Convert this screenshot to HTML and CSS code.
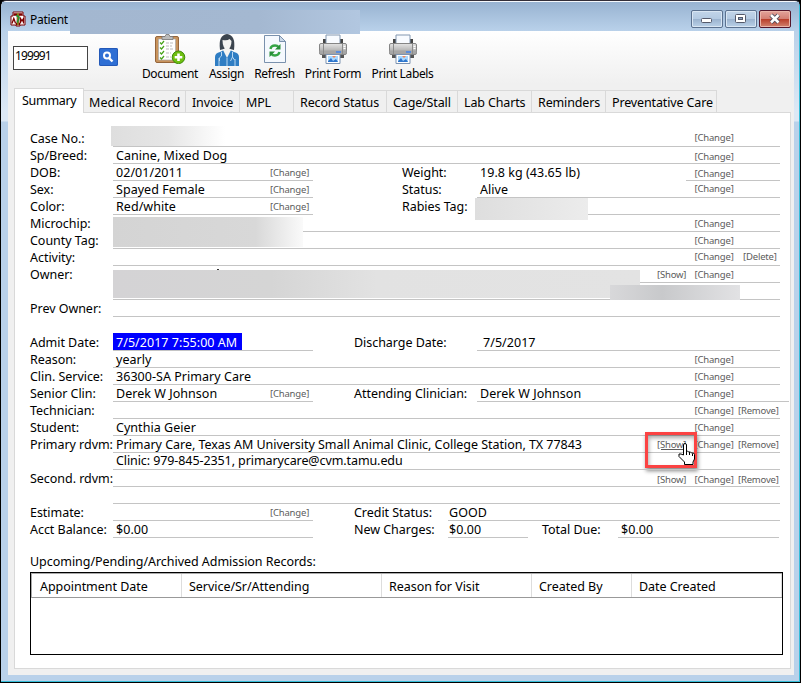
FILE: index.html
```html
<!DOCTYPE html>
<html lang="en">
<head>
<meta charset="utf-8">
<title>Patient</title>
<link rel="stylesheet" href="styles.css">
</head>
<body>
<svg class="defs" width="0" height="0" aria-hidden="true">
  <defs>
    <linearGradient id="metal" x1="0" y1="0" x2="0" y2="1"><stop offset="0" stop-color="#e4e4e4"/><stop offset="1" stop-color="#9b9b9b"/></linearGradient>
    <symbol id="printer" viewBox="0 0 30 30">
      <path d="M5 5h20v6H5z" fill="#444"/>
      <path d="M8 1h14v10H8z" fill="#f8fbff" stroke="#8297b0"/>
      <rect x="1.500" y="9.500" width="27" height="11" rx="1.500" fill="url(#metal)" stroke="#858585"/>
      <path d="M1.500 16.500h27v3h-27z" fill="#a6a6a6"/>
      <path d="M24.500 10v10M5.500 10v10" stroke="#8b8b8b"/>
      <path d="M25.500 12.500h2M25.500 14.500h2" stroke="#fff"/>
      <path d="M4 21h22v3H4z" fill="#555"/>
      <path d="M18 18h5" stroke="#3f83ee" stroke-width="1.500"/>
      <path d="M8 20.500h14v9H8z" fill="#fff" stroke="#7c93b1"/>
      <path d="M10 22h10v6H10z" fill="#a9d8ff"/>
      <path d="M10 27l3-3 2 3 3-2 2 3H10z" fill="#2f76cc"/><path d="M14 22l2 2 2-2z" fill="#f08858"/>
    </symbol>
  </defs>
</svg>
<div class="window">
  <header class="titlebar">
    <svg class="logo" viewBox="0 0 16 16"><path d="M3 1h10v4h2v9h-5v1H6v-1H1V5h2z" fill="#fff" stroke="#7d0000"/><path d="M3.500 3.500h9M8 3v10M6 13h4" stroke="#7d0000" stroke-width="2.500" fill="none"/><path d="M2 12.500l1.800-5 1.800 5M10.500 12.500v-5l1.500 2.500 1.500-2.500v5" stroke="#7d0000" fill="none" stroke-width="1.300"/><path d="M8 2v12" stroke="#8fa42a" stroke-width="1.400"/><path d="M6 4.500q4 1 3 3t-2 4" stroke="#159a35" fill="none" stroke-width="1.300"/></svg>
    <span class="title">Patient</span>
    <i class="mask mask-title"></i>
    <div class="winbtns">
      <b class="wb"><svg viewBox="0 0 32 18"><rect x="10.500" y="8.500" width="10" height="4" rx="1" fill="#fff" stroke="#54596a"/></svg></b>
      <b class="wb"><svg viewBox="0 0 32 18"><rect x="10.500" y="4.500" width="10" height="8" rx="1" fill="#fff" stroke="#54596a"/><rect x="13.500" y="7.500" width="4" height="2" fill="#8ca5c4" stroke="#54596a"/></svg></b>
      <b class="wb close"><svg viewBox="0 0 32 18"><path d="M12 5l7.500 7.500M19.500 5L12 12.500" stroke="#4c4c5c" stroke-width="4.400"/><path d="M12 5l7.500 7.500M19.500 5L12 12.500" stroke="#fff" stroke-width="2.500"/></svg></b>
    </div>
  </header>
  <main class="client">
    <div class="toolbar">
      <div class="search">199991</div>
      <div class="find"><svg viewBox="0 0 19 18"><circle cx="8" cy="7.500" r="3" fill="none" stroke="#fff" stroke-width="2"/><path d="M10 10l3.500 3.500" stroke="#fff" stroke-width="2.400"/></svg></div>
      <div class="tool document"><svg viewBox="0 0 32 30">
        <rect x="1.500" y="2.500" width="23" height="26" rx="1.500" fill="#c8935c" stroke="#95653b"/><path d="M4.500 5h17v21h-17z" fill="#fff" stroke="#aaa" stroke-width=".7"/>
        <path d="M8 2.500h3l1-2h3l1 2h3v3H8z" fill="#bbb" stroke="#777" stroke-width=".8"/>
        <path d="M6 8.500l1.500 1.500L10 7M6 13.500L7.500 15l2.500-3M6 18.500L7.500 20l2.500-3M6 23.500L7.500 25l2.500-3" stroke="#48a41b" fill="none" stroke-width="1.200"/>
        <path d="M12 9h7M12 12h6M12 15h7M12 19h5M12 23h5" stroke="#bbb" stroke-dasharray="3 1"/>
        <circle cx="24.500" cy="23.300" r="6.300" fill="#6fbf10" stroke="#3d8a0a"/><path d="M24.500 19.500v7.600M20.700 23.300h7.600" stroke="#fff" stroke-width="2.600"/></svg><span>Document</span></div>
      <div class="tool assign"><svg viewBox="0 0 24 32">
        <path d="M5 16Q3 1 12 0q9 1 7 16l-4-1H9z" fill="#3c454f"/><path d="M7.500 6q5 1 7-1l2 2q0 7-4.500 9Q7.500 14 7.500 6z" fill="#f5f4f1"/>
        <path d="M0 32V23q0-4 5-5l4-2 3 5 3-5 4 2q5 1 5 5v9z" fill="#2f7dc3"/><path d="M8 16l4 8 4-8-2-2h-4z" fill="#f5f4f1"/>
        <path d="M6.500 18v4q-3 1-2 5M17.500 18v5l-2 4M17.500 23l2 3M12 24v8M4 24v8M20 25v7" stroke="#b9d8f1" fill="none"/></svg><span>Assign</span></div>
      <div class="tool refresh"><svg viewBox="0 0 22 30"><path d="M.500 1.500h15l6 6v21H.500z" fill="#f5f9fe" stroke="#7a91ad"/><path d="M15.500 1.500v6h6z" fill="#cbd9e8" stroke="#7a91ad"/>
        <path d="M6.500 15q.500-3.500 4.500-3.500 2.500 0 3.500 1.500M15.500 18q-1 3.500-4.500 3.500-2.500 0-3.500-1.500" fill="none" stroke="#35a445" stroke-width="2.400"/><path d="M16.500 10v5.500H11zM5.500 23v-5.500H11z" fill="#288e39"/></svg><span>Refresh</span></div>
      <div class="tool form"><svg viewBox="0 0 30 30"><use href="#printer"/></svg><span>Print Form</span></div>
      <div class="tool labels"><svg viewBox="0 0 30 30"><use href="#printer"/></svg><span>Print Labels</span></div>
    </div>
    <nav class="tabs">
      <div class="tab active">Summary</div><div class="tab t2">Medical Record</div><div class="tab t3">Invoice</div><div class="tab t4">MPL</div><div class="tab t5">Record Status</div><div class="tab t6">Cage/Stall</div><div class="tab t7">Lab Charts</div><div class="tab t8">Reminders</div><div class="tab t9">Preventative Care</div>
    </nav>
    <section class="page">
      <div class="row"><label>Case No.:</label><div class="field"><i class="mask mask-case"></i><div class="acts up"><a class="c2">[Change]</a></div></div></div>
      <div class="row"><label>Sp/Breed:</label><div class="field"><span>Canine, Mixed Dog</span><div class="acts down"><a class="c2">[Change]</a></div></div></div>
      <div class="row"><label>DOB:</label><div class="field half"><span>02/01/2011</span><a class="own">[Change]</a></div><label class="mid">Weight:</label><div class="plain">19.8 kg (43.65 lb)</div><div class="field short"><div class="acts down"><a class="c2">[Change]</a></div></div></div>
      <div class="row"><label>Sex:</label><div class="field half"><span>Spayed Female</span><a class="own">[Change]</a></div><label class="mid">Status:</label><div class="field"><span>Alive</span><div class="acts up"><a class="c2">[Change]</a></div></div></div>
      <div class="row"><label>Color:</label><div class="field half"><span>Red/white</span><a class="own">[Change]</a></div><label class="mid">Rabies Tag:</label><div class="field"><i class="mask mask-rabies"></i></div></div>
      <div class="row"><label>Microchip:</label><div class="field"><i class="mask mask-chip"></i><div class="acts"><a class="c2">[Change]</a></div></div></div>
      <div class="row"><label>County Tag:</label><div class="field"><div class="acts"><a class="c2">[Change]</a></div></div></div>
      <div class="row"><label>Activity:</label><div class="field"><div class="acts up"><a class="c2">[Change]</a><a class="c3 del">[Delete]</a></div></div></div>
      <div class="row"><label>Owner:</label><div class="field"><i class="speck"></i><i class="mask mask-owner"></i><div class="acts"><a class="c1">[Show]</a><a class="c2">[Change]</a></div></div></div>
      <div class="row"><label></label><div class="field"><i class="mask mask-owner2"></i></div></div>
      <div class="row"><label>Prev Owner:</label><div class="field"></div></div>
      <div class="row"></div>
      <div class="row"><label>Admit Date:</label><div class="field half"><span class="selected">7/5/2017 7:55:00 AM</span></div><label class="mid2">Discharge Date:</label><div class="field discharge"><span>7/5/2017</span></div></div>
      <div class="row"><label>Reason:</label><div class="field"><span>yearly</span><div class="acts"><a class="c2">[Change]</a></div></div></div>
      <div class="row"><label>Clin. Service:</label><div class="field"><span>36300-SA Primary Care</span><div class="acts"><a class="c2">[Change]</a></div></div></div>
      <div class="row long"><label>Senior Clin:</label><div class="field half"><span>Derek W Johnson</span><a class="own">[Change]</a></div><label class="mid2">Attending Clinician:</label><div class="field"><span>Derek W Johnson</span><div class="acts"><a class="c2">[Change]</a></div></div></div>
      <div class="row"><label>Technician:</label><div class="field"><div class="acts"><a class="c2">[Change]</a><a class="c3">[Remove]</a></div></div></div>
      <div class="row"><label>Student:</label><div class="field"><span>Cynthia Geier</span><div class="acts"><a class="c2">[Change]</a></div></div></div>
      <div class="row"><label>Primary rdvm:</label><div class="field"><span class="address">Primary Care, Texas AM University Small Animal Clinic, College Station, TX 77843</span><div class="acts"><a class="c1 hover">[Show]</a><a class="c2">[Change]</a><a class="c3">[Remove]</a></div>
        <div class="callout"><svg viewBox="0 0 18 23"><path d="M5.500 12V2q0-1.500 1.500-1.500T8.500 2v6h1l1 1h2l1 1h2l1 1.500V16l-1.500 3v2.500H6.500V19L1 13.500V11h2z" fill="#fff" stroke="#000"/><path d="M8.500 8v4M11.500 9v3M14.500 10.500V13" stroke="#000" fill="none"/></svg></div></div></div>
      <div class="row"><label></label><div class="field"><span class="raised">Clinic: 979-845-2351, primarycare@cvm.tamu.edu</span></div></div>
      <div class="row"><label>Second. rdvm:</label><div class="field"><div class="acts down"><a class="c1">[Show]</a><a class="c2">[Change]</a><a class="c3">[Remove]</a></div></div></div>
      <div class="row"><label></label><div class="field"></div></div>
      <div class="row"><label>Estimate:</label><div class="field half"><span></span><a class="own">[Change]</a></div><label class="mid3">Credit Status:</label><div class="field flush"><span>GOOD</span></div></div>
      <div class="row"><label>Acct Balance:</label><div class="field half"><span>$0.00</span></div><label class="mid3">New Charges:</label><div class="field flush charges"><span>$0.00</span></div><label class="total">Total Due:</label><div class="field due"><span>$0.00</span></div></div>
      <h2>Upcoming/Pending/Archived Admission Records:</h2>
      <div class="records">
        <div class="head"><div>Appointment Date</div><div>Service/Sr/Attending</div><div>Reason for Visit</div><div>Created By</div><div>Date Created</div></div>
      </div>
    </section>
  </main>
</div>
</body>
</html>
```
FILE: styles.css
```css
* { box-sizing: border-box; }
body {
  margin: 0;
  width: 801px;
  height: 683px;
  overflow: hidden;
  background: #000;
  color: #000;
  font: 12.5px/17px "Noto Sans", "Open Sans", sans-serif;
  letter-spacing: -0.04px;
}
.defs { position: absolute; }
svg { display: block; }
.window {
  width: 801px;
  height: 683px;
  border: 1px solid #000;
  border-top-color: #332e38;
  border-radius: 6px 6px 0 0;
  padding: 0 7px 7px;
  background: linear-gradient(#99b4d1 0, #bad1e9 30px, #dce8f5 110px, #dce8f5 120px, #b9d1ea 121px);
  box-shadow: inset -1px -1px #35bdd8, inset 0 1px #f5f8fc;
}
.titlebar {
  position: relative;
  display: flex;
  height: 30px;
  margin: 0 -6px;
  padding: 0 8px 0 8px;
  background: linear-gradient(transparent 1px, #98b3d1 1px, #b9d1ea 30px);
}
.logo { width: 16px; height: 16px; margin-top: 10px; }
.title { margin: 10px 0 0 4px; font-size: 12px; letter-spacing: -0.3px; }
.winbtns { display: flex; gap: 2px; margin: 9px 0 0 auto; }
.wb { width: 32px; height: 18px; border: 1px solid #5b718f; border-radius: 2px; background: linear-gradient(#c2d5e9, #b4cae2 48%, #9ab2ce 50%, #bad1e8); box-shadow: inset 0 0 0 1px #d9e6f3; }
.wb svg { width: 32px; height: 18px; margin: -1px; }
.wb.close { border-color: #54152a; background: linear-gradient(#e3a49b, #d48074 48%, #b83c28 50%, #d1836f); box-shadow: inset 0 0 0 1px #eab5a9; }
.client { height: 644px; margin-right: -1px; background: #f0f0f0; }
.toolbar { display: flex; height: 53px; padding-left: 5px; background: linear-gradient(#fff, #f0f0f0); }
.search { width: 75px; height: 24px; margin-top: 15px; padding: 0 1px; border: 1px solid #444; background: #fff; font-size: 12px; letter-spacing: -0.9px; }
.find { width: 19px; height: 18px; margin: 17px 24px 0 11px; border-radius: 2px; background: #2f6fd4; box-shadow: inset 0 0 0 1px #2459b8; }
.tool { display: flex; flex-direction: column; align-items: center; height: 53px; margin-right: 11px; white-space: nowrap; font-size: 12px; letter-spacing: -0.35px; }
.tool svg { height: 30px; margin-top: 3px; flex: none; }
.tool span { margin-top: 1px; }
.document { width: 56px; }
.document svg { width: 32px; }
.assign { width: 35px; }
.assign svg { width: 24px; height: 32px; }
.assign span { margin-top: -1px; }
.refresh { width: 39px; }
.refresh svg { width: 22px; }
.form { width: 56px; }
.labels { width: 61px; }
.form svg, .labels svg { width: 30px; }
.tabs { display: flex; align-items: flex-end; height: 28px; padding-left: 6px; }
.tab { height: 22px; padding: 3px 0 0 4px; border: 1px solid #d9d9d9; border-left: 0; border-bottom: 0; white-space: nowrap; font-size: 12.5px; letter-spacing: -0.14px; }
.tab.active { position: relative; width: 70px; height: 25px; margin-bottom: -1px; padding: 3px 0 0 7px; border-left: 1px solid #d9d9d9; background: #fff; letter-spacing: -0.3px; }
.tab.t2 { width: 102px; padding-left: 5px; letter-spacing: 0.1px; }
.t3 { width: 54px; padding-left: 6px; }
.t4 { width: 54px; padding-left: 6px; }
.t5 { width: 93px; padding-left: 6px; }
.t6 { width: 71px; padding-left: 6px; }
.t7 { width: 74px; padding-left: 6px; }
.t8 { width: 74px; padding-left: 6px; }
.t9 { width: 111px; padding-left: 6px; }
.page { width: 777px; height: 557px; margin-left: 6px; padding: 17px 7px 0 15px; border: 1px solid #d9d9d9; background: #fff; }
.row { display: flex; width: 750px; height: 17px; white-space: nowrap; }
.row.long { width: 759px; }
.row.long .acts { margin-right: 9px; }
label { flex: none; width: 83px; }
.mid { width: 75px; margin-left: 89px; }
.mid2 { width: 123px; margin-left: 41px; }
.mid3 { width: 94px; margin-left: 41px; }
.total { width: 76px; margin-left: 14px; }
.field { position: relative; display: flex; flex: 1; justify-content: space-between; min-width: 0; padding-left: 3px; border-bottom: 1px solid #c4c4c4; letter-spacing: 0.04px; }
.half { flex: none; width: 200px; }
.plain { width: 209px; padding-left: 3px; letter-spacing: 0.04px; }
.address { letter-spacing: -0.035px; }
.short { justify-content: flex-end; padding-left: 0; }
.short .acts { flex: none; margin-left: -40px; }
.discharge { padding-left: 6px; }
.flush { padding-left: 1px; }
.charges { flex: none; width: 80px; }
.due { margin-right: 1px; }
.acts { display: grid; grid-template-columns: 37.5px 43.5px 42px; margin-left: auto; }
.acts, .own { color: #5c5c5c; font-size: 9.5px; letter-spacing: -0.18px; line-height: 17px; }
.own { width: 43px; }
.acts.up { line-height: 15px; }
.acts.down { line-height: 19px; }
.c1 { grid-column: 1; }
.c2 { grid-column: 2; }
.c3 { grid-column: 3; }
.del { padding-left: 5px; }
.hover { text-decoration: underline; }
.raised { line-height: 15px; letter-spacing: -0.09px; }
.selected { height: 17px; margin: -1px 0 0 -3px; padding: 1px 0 0 3px; background: #00f; color: #fff; width: 129px; }
.mask { position: absolute; }
.mask-title { left: 68px; top: 9px; z-index: 1; width: 290px; height: 24px; background: linear-gradient(90deg, #a3b7d0, #a4b8d1 65%, #b2c7e0); }
.mask-case { left: -2px; top: -4px; width: 114px; height: 20px; background: linear-gradient(90deg, #dedede, #e6e6e6 50%, #fff); }
.mask-rabies { left: -2px; top: 0; z-index: 1; width: 113px; height: 22px; background: linear-gradient(90deg, #dedede, #ececec); }
.mask-chip { left: 0; top: 2px; z-index: 1; width: 190px; height: 30px; background: linear-gradient(90deg, #d4d4d4, #d8d8d8 75%, #fafafa); }
.mask-owner { left: 0; top: 4px; z-index: 1; width: 527px; height: 28px; background: linear-gradient(90deg, #d4d3d5, #d5d5d5 30%, #e2e2e2 50%, #e3e3e3); }
.mask-owner2 { left: 497px; top: 2px; z-index: 2; width: 130px; height: 15px; background: linear-gradient(90deg, #d8d8da, #c8c9cb 40%, #e2e2e4); }
.speck { position: absolute; left: 104px; top: 3px; width: 2px; height: 1px; background: #333; }
.callout { position: absolute; left: 532px; top: -4px; width: 52px; height: 36px; border: 3px solid #fb4343; box-shadow: 1px 3px 4px #0007, inset 1px 3px 4px #0005; }
.callout svg { width: 18px; height: 23px; margin: 8px 0 0 30px; }
h2 { margin: 15px 0 2px; font: inherit; }
.records { width: 753px; height: 83px; border: 1px solid #000; }
.head { display: grid; grid-template-columns: 150px 200px 150px 100px 1fr; height: 25px; border-top: 1px solid #aaa; border-left: 1px solid #aaa; border-bottom: 1px solid #999; }
.head div { padding: 4px 0 0 7px; border-right: 1px solid #ddd; }
.head div:first-child { padding-left: 8px; }
```
